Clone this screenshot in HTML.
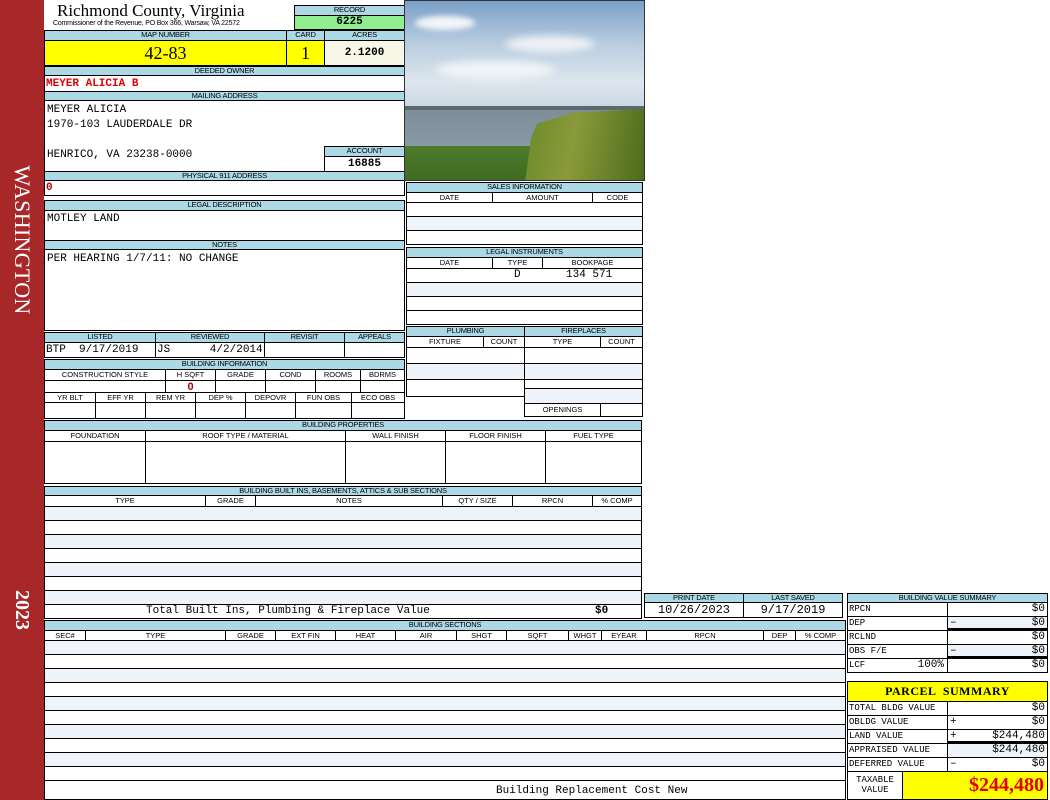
<!DOCTYPE html>
<html><head><meta charset="utf-8"><style>
*{margin:0;padding:0;box-sizing:border-box}
body{width:1050px;height:800px;background:#fff;position:relative;overflow:hidden;font-family:"Liberation Sans",sans-serif}
div{position:absolute}
.h{background:#add8e6;border:1px solid #000;font-size:7.5px;text-align:center;line-height:8px;color:#000;letter-spacing:-0.2px;white-space:nowrap;overflow:hidden}
.c{border:1px solid #000;background:#fff;font-family:"Liberation Mono",monospace;font-size:11px;white-space:pre;overflow:hidden}
.s{border:1px solid #000;background:#fff;font-size:7.5px;text-align:center;line-height:9px;white-space:nowrap;overflow:hidden}
.a{background:#eef3fa}
.m{font-family:"Liberation Mono",monospace}
</style></head><body>
<div style="left:0;top:0;width:44px;height:800px;background:#a8282a"></div>
<div style="left:7px;top:155px;width:30px;height:170px;"><div style="left:-70px;top:70px;width:170px;height:30px;transform:rotate(90deg);color:#fff;font-family:'Liberation Serif',serif;font-size:22px;line-height:30px;text-align:center;letter-spacing:0.3px">WASHINGTON</div></div>
<div style="left:7px;top:590px;width:30px;height:40px;"><div style="left:-5px;top:5px;width:40px;height:30px;transform:rotate(90deg);color:#fff;font-family:'Liberation Serif',serif;font-size:20px;font-weight:bold;line-height:30px;text-align:center">2023</div></div>

<div style="left:57px;top:1px;font-family:'Liberation Serif',serif;font-size:17px;line-height:20px">Richmond County, Virginia</div>
<div style="left:53px;top:19px;font-size:7px;line-height:9px;letter-spacing:-0.2px">Commissioner of the Revenue, PO Box 366, Warsaw, VA 22572</div>
<div class="h" style="left:294px;top:5px;width:111px;height:11px">RECORD</div>
<div class="c" style="left:294px;top:15px;width:111px;height:15px;background:#90ee90;text-align:center;font-weight:bold;line-height:13px">6225</div>

<div class="h" style="left:44px;top:30px;width:243px;height:11px">MAP NUMBER</div>
<div class="h" style="left:286px;top:30px;width:39px;height:11px">CARD</div>
<div class="h" style="left:324px;top:30px;width:81px;height:11px">ACRES</div>
<div class="c" style="left:44px;top:40px;width:243px;height:26px;background:#ffff00;font-family:'Liberation Serif',serif;font-size:18px;text-align:center;line-height:24px">42-83</div>
<div class="c" style="left:286px;top:40px;width:39px;height:26px;background:#ffff00;font-family:'Liberation Serif',serif;font-size:18px;text-align:center;line-height:24px">1</div>
<div class="c" style="left:324px;top:40px;width:81px;height:26px;background:#f7f7e8;text-align:center;line-height:24px;font-weight:bold">2.1200</div>

<div class="h" style="left:44px;top:66px;width:361px;height:10px">DEEDED OWNER</div>
<div class="c" style="left:44px;top:75px;width:361px;height:17px;color:#e00000;font-weight:bold;line-height:16px;padding-left:1px">MEYER ALICIA B</div>
<div class="h" style="left:44px;top:91px;width:361px;height:10px">MAILING ADDRESS</div>
<div class="c" style="left:44px;top:100px;width:361px;height:72px;padding:2px 2px;line-height:15px">MEYER ALICIA
1970-103 LAUDERDALE DR

HENRICO, VA 23238-0000</div>
<div class="h" style="left:324px;top:146px;width:81px;height:11px">ACCOUNT</div>
<div class="c" style="left:324px;top:156px;width:81px;height:16px;text-align:center;font-weight:bold;line-height:14px">16885</div>
<div class="h" style="left:44px;top:171px;width:361px;height:10px">PHYSICAL 911 ADDRESS</div>
<div class="c" style="left:44px;top:180px;width:361px;height:16px;color:#c00000;font-weight:bold;line-height:15px;padding-left:1px">0</div>

<div class="h" style="left:44px;top:200px;width:361px;height:11px">LEGAL DESCRIPTION</div>
<div class="c" style="left:44px;top:210px;width:361px;height:31px;padding:2px 2px;line-height:13px">MOTLEY LAND</div>
<div class="h" style="left:44px;top:240px;width:361px;height:10px">NOTES</div>
<div class="c" style="left:44px;top:249px;width:361px;height:82px;padding:2px 2px;line-height:15px">PER HEARING 1/7/11: NO CHANGE</div>

<!-- photo -->
<div style="left:404px;top:0;width:241px;height:181px;overflow:hidden;border:1px solid #333">
 <div style="left:0;top:0;width:241px;height:108px;background:linear-gradient(#7aa0c8,#b9cde0 40%,#dde6ee 75%,#c9d6e2)"></div>
 <div style="left:10px;top:15px;width:60px;height:14px;background:#f3f6f8;border-radius:50%;filter:blur(3px)"></div>
 <div style="left:100px;top:35px;width:90px;height:16px;background:#eef2f6;border-radius:50%;filter:blur(4px)"></div>
 <div style="left:30px;top:60px;width:120px;height:18px;background:#f0f4f7;border-radius:50%;filter:blur(4px)"></div>
 <div style="left:0;top:105px;width:241px;height:4px;background:#5a6a6c"></div>
 <div style="left:0;top:109px;width:241px;height:40px;background:linear-gradient(#7d8e9a,#8a9aa4)"></div>
 <div style="left:0;top:145px;width:241px;height:36px;background:linear-gradient(#4e7a2a,#3e6a22)"></div>
 <div style="left:120px;top:108px;width:121px;height:73px;background:linear-gradient(100deg,#6a8a2a,#8a9a3a 40%,#4a6a1a);clip-path:polygon(10% 20%,40% 5%,100% 0,100% 100%,0 100%,5% 40%)"></div>
</div>

<!-- listed -->
<div class="h" style="left:44px;top:332px;width:112px;height:11px">LISTED</div>
<div class="h" style="left:155px;top:332px;width:110px;height:11px">REVIEWED</div>
<div class="h" style="left:264px;top:332px;width:81px;height:11px">REVISIT</div>
<div class="h" style="left:344px;top:332px;width:61px;height:11px">APPEALS</div>
<div class="c" style="left:44px;top:342px;width:112px;height:16px;line-height:14px;padding-left:1px">BTP  9/17/2019</div>
<div class="c" style="left:155px;top:342px;width:110px;height:16px;line-height:14px;padding-left:1px">JS      4/2/2014</div>
<div class="c" style="left:264px;top:342px;width:81px;height:16px"></div>
<div class="c" style="left:344px;top:342px;width:61px;height:16px"></div>

<div class="h" style="left:44px;top:359px;width:361px;height:11px">BUILDING INFORMATION</div>
<div class="s" style="left:44px;top:369px;width:122px;height:12px">CONSTRUCTION STYLE</div>
<div class="s" style="left:165px;top:369px;width:51px;height:12px">H SQFT</div>
<div class="s" style="left:215px;top:369px;width:51px;height:12px">GRADE</div>
<div class="s" style="left:265px;top:369px;width:51px;height:12px">COND</div>
<div class="s" style="left:315px;top:369px;width:46px;height:12px">ROOMS</div>
<div class="s" style="left:360px;top:369px;width:45px;height:12px">BDRMS</div>
<div class="c" style="left:44px;top:380px;width:122px;height:13px"></div>
<div class="c" style="left:165px;top:380px;width:51px;height:13px;color:#c00000;font-weight:bold;text-align:center;line-height:12px;font-family:'Liberation Sans',sans-serif">0</div>
<div class="c" style="left:215px;top:380px;width:51px;height:13px"></div>
<div class="c" style="left:265px;top:380px;width:51px;height:13px"></div>
<div class="c" style="left:315px;top:380px;width:46px;height:13px"></div>
<div class="c" style="left:360px;top:380px;width:45px;height:13px"></div>
<div class="s" style="left:44px;top:392px;width:52px;height:11px">YR BLT</div>
<div class="s" style="left:95px;top:392px;width:51px;height:11px">EFF YR</div>
<div class="s" style="left:145px;top:392px;width:51px;height:11px">REM YR</div>
<div class="s" style="left:195px;top:392px;width:51px;height:11px">DEP %</div>
<div class="s" style="left:245px;top:392px;width:51px;height:11px">DEPOVR</div>
<div class="s" style="left:295px;top:392px;width:57px;height:11px">FUN OBS</div>
<div class="s" style="left:351px;top:392px;width:54px;height:11px">ECO OBS</div>
<div class="c" style="left:44px;top:402px;width:52px;height:17px"></div>
<div class="c" style="left:95px;top:402px;width:51px;height:17px"></div>
<div class="c" style="left:145px;top:402px;width:51px;height:17px"></div>
<div class="c" style="left:195px;top:402px;width:51px;height:17px"></div>
<div class="c" style="left:245px;top:402px;width:51px;height:17px"></div>
<div class="c" style="left:295px;top:402px;width:57px;height:17px"></div>
<div class="c" style="left:351px;top:402px;width:54px;height:17px"></div>

<!-- sales -->
<div class="h" style="left:406px;top:182px;width:237px;height:11px">SALES INFORMATION</div>
<div class="s" style="left:406px;top:192px;width:87px;height:11px">DATE</div>
<div class="s" style="left:492px;top:192px;width:101px;height:11px">AMOUNT</div>
<div class="s" style="left:592px;top:192px;width:51px;height:11px">CODE</div>
<div class="c" style="left:406px;top:202px;width:237px;height:15px"></div>
<div class="c a" style="left:406px;top:216px;width:237px;height:15px"></div>
<div class="c" style="left:406px;top:230px;width:237px;height:15px"></div>

<div class="h" style="left:406px;top:247px;width:237px;height:11px">LEGAL INSTRUMENTS</div>
<div class="s" style="left:406px;top:257px;width:87px;height:12px">DATE</div>
<div class="s" style="left:492px;top:257px;width:51px;height:12px">TYPE</div>
<div class="s" style="left:542px;top:257px;width:101px;height:12px">BOOKPAGE</div>
<div class="c" style="left:406px;top:268px;width:237px;height:15px;line-height:13px"><span style="position:absolute;left:107px">D</span><span style="position:absolute;left:159px">134 571</span></div>
<div class="c a" style="left:406px;top:282px;width:237px;height:15px"></div>
<div class="c" style="left:406px;top:296px;width:237px;height:15px"></div>
<div class="c" style="left:406px;top:310px;width:237px;height:15px"></div>

<!-- plumbing -->
<div class="h" style="left:406px;top:326px;width:119px;height:11px">PLUMBING</div>
<div class="h" style="left:524px;top:326px;width:119px;height:11px">FIREPLACES</div>
<div class="s" style="left:406px;top:336px;width:78px;height:12px">FIXTURE</div>
<div class="s" style="left:483px;top:336px;width:42px;height:12px">COUNT</div>
<div class="s" style="left:524px;top:336px;width:77px;height:12px">TYPE</div>
<div class="s" style="left:600px;top:336px;width:43px;height:12px">COUNT</div>
<div class="c" style="left:406px;top:347px;width:119px;height:17px"></div>
<div class="c a" style="left:406px;top:363px;width:119px;height:17px"></div>
<div class="c" style="left:406px;top:379px;width:119px;height:18px"></div>
<div class="c" style="left:524px;top:347px;width:119px;height:17px"></div>
<div class="c a" style="left:524px;top:363px;width:119px;height:17px"></div>
<div class="c" style="left:524px;top:379px;width:119px;height:17px"></div>
<div class="c a" style="left:524px;top:388px;width:119px;height:16px"></div>
<div class="s" style="left:524px;top:403px;width:77px;height:14px;line-height:12px">OPENINGS</div>
<div class="c" style="left:600px;top:403px;width:43px;height:14px"></div>

<!-- building properties -->
<div class="h" style="left:44px;top:420px;width:598px;height:11px">BUILDING PROPERTIES</div>
<div class="s" style="left:44px;top:430px;width:102px;height:12px">FOUNDATION</div>
<div class="s" style="left:145px;top:430px;width:201px;height:12px">ROOF TYPE / MATERIAL</div>
<div class="s" style="left:345px;top:430px;width:101px;height:12px">WALL FINISH</div>
<div class="s" style="left:445px;top:430px;width:101px;height:12px">FLOOR FINISH</div>
<div class="s" style="left:545px;top:430px;width:97px;height:12px">FUEL TYPE</div>
<div class="c" style="left:44px;top:441px;width:102px;height:43px"></div>
<div class="c" style="left:145px;top:441px;width:201px;height:43px"></div>
<div class="c" style="left:345px;top:441px;width:101px;height:43px"></div>
<div class="c" style="left:445px;top:441px;width:101px;height:43px"></div>
<div class="c" style="left:545px;top:441px;width:97px;height:43px"></div>

<!-- built ins -->
<div class="h" style="left:44px;top:486px;width:598px;height:10px">BUILDING BUILT INS, BASEMENTS, ATTICS &amp; SUB SECTIONS</div>
<div class="s" style="left:44px;top:495px;width:162px;height:12px">TYPE</div>
<div class="s" style="left:205px;top:495px;width:51px;height:12px">GRADE</div>
<div class="s" style="left:255px;top:495px;width:188px;height:12px">NOTES</div>
<div class="s" style="left:442px;top:495px;width:71px;height:12px">QTY / SIZE</div>
<div class="s" style="left:512px;top:495px;width:81px;height:12px">RPCN</div>
<div class="s" style="left:592px;top:495px;width:50px;height:12px">% COMP</div>
<div class="c a" style="left:44px;top:506px;width:598px;height:15px"></div>
<div class="c" style="left:44px;top:520px;width:598px;height:15px"></div>
<div class="c a" style="left:44px;top:534px;width:598px;height:15px"></div>
<div class="c" style="left:44px;top:548px;width:598px;height:15px"></div>
<div class="c a" style="left:44px;top:562px;width:598px;height:15px"></div>
<div class="c" style="left:44px;top:576px;width:598px;height:15px"></div>
<div class="c a" style="left:44px;top:590px;width:598px;height:15px"></div>
<div class="c" style="left:44px;top:604px;width:598px;height:15px;line-height:13px"><span style="position:absolute;left:101px">Total Built Ins, Plumbing &amp; Fireplace Value</span><span style="position:absolute;left:550px;font-weight:bold">$0</span></div>

<!-- print date -->
<div class="h" style="left:644px;top:593px;width:100px;height:10px">PRINT DATE</div>
<div class="h" style="left:743px;top:593px;width:100px;height:10px">LAST SAVED</div>
<div class="c" style="left:644px;top:602px;width:100px;height:16px;text-align:center;line-height:14px;font-size:12px">10/26/2023</div>
<div class="c" style="left:743px;top:602px;width:100px;height:16px;text-align:center;line-height:14px;font-size:12px">9/17/2019</div>

<!-- building sections -->
<div class="h" style="left:44px;top:620px;width:802px;height:11px">BUILDING SECTIONS</div>
<div class="s" style="left:44px;top:630px;width:42px;height:11px">SEC#</div>
<div class="s" style="left:85px;top:630px;width:141px;height:11px">TYPE</div>
<div class="s" style="left:225px;top:630px;width:51px;height:11px">GRADE</div>
<div class="s" style="left:275px;top:630px;width:61px;height:11px">EXT FIN</div>
<div class="s" style="left:335px;top:630px;width:61px;height:11px">HEAT</div>
<div class="s" style="left:395px;top:630px;width:62px;height:11px">AIR</div>
<div class="s" style="left:456px;top:630px;width:51px;height:11px">SHGT</div>
<div class="s" style="left:506px;top:630px;width:63px;height:11px">SQFT</div>
<div class="s" style="left:568px;top:630px;width:34px;height:11px">WHGT</div>
<div class="s" style="left:601px;top:630px;width:46px;height:11px">EYEAR</div>
<div class="s" style="left:646px;top:630px;width:118px;height:11px">RPCN</div>
<div class="s" style="left:763px;top:630px;width:33px;height:11px">DEP</div>
<div class="s" style="left:795px;top:630px;width:51px;height:11px">% COMP</div>
<div class="c a" style="left:44px;top:640px;width:802px;height:15px"></div>
<div class="c" style="left:44px;top:654px;width:802px;height:15px"></div>
<div class="c a" style="left:44px;top:668px;width:802px;height:15px"></div>
<div class="c" style="left:44px;top:682px;width:802px;height:15px"></div>
<div class="c a" style="left:44px;top:696px;width:802px;height:15px"></div>
<div class="c" style="left:44px;top:710px;width:802px;height:15px"></div>
<div class="c a" style="left:44px;top:724px;width:802px;height:15px"></div>
<div class="c" style="left:44px;top:738px;width:802px;height:15px"></div>
<div class="c a" style="left:44px;top:752px;width:802px;height:15px"></div>
<div class="c" style="left:44px;top:766px;width:802px;height:15px"></div>
<div class="c" style="left:44px;top:780px;width:802px;height:20px;line-height:20px"><span style="position:absolute;left:451px">Building Replacement Cost New</span></div>

<!-- value summary -->
<div class="h" style="left:847px;top:593px;width:201px;height:10px">BUILDING VALUE SUMMARY</div>
<div class="c m" style="left:847px;top:602px;width:101px;height:15px;font-size:9px;line-height:13px;padding-left:1px">RPCN</div>
<div class="c" style="left:947px;top:602px;width:101px;height:15px;text-align:right;line-height:13px;padding-right:2px">$0</div>
<div class="c m" style="left:847px;top:616px;width:101px;height:15px;font-size:9px;line-height:13px;padding-left:1px">DEP</div>
<div class="c a" style="left:947px;top:616px;width:101px;height:15px;line-height:13px;padding:0 2px;border-bottom:3px solid #000"><span>–</span><span style="position:absolute;right:2px">$0</span></div>
<div class="c m" style="left:847px;top:630px;width:101px;height:15px;font-size:9px;line-height:13px;padding-left:1px">RCLND</div>
<div class="c" style="left:947px;top:630px;width:101px;height:15px;text-align:right;line-height:13px;padding-right:2px">$0</div>
<div class="c m" style="left:847px;top:644px;width:101px;height:15px;font-size:9px;line-height:13px;padding-left:1px">OBS F/E</div>
<div class="c a" style="left:947px;top:644px;width:101px;height:15px;line-height:13px;padding:0 2px;border-bottom:3px solid #000"><span>–</span><span style="position:absolute;right:2px">$0</span></div>
<div class="c m" style="left:847px;top:658px;width:101px;height:15px;font-size:9px;line-height:13px;padding-left:1px">LCF<span style="position:absolute;right:3px;font-size:11px">100%</span></div>
<div class="c" style="left:947px;top:658px;width:101px;height:15px;text-align:right;line-height:13px;padding-right:2px">$0</div>

<!-- parcel summary -->
<div class="c" style="left:847px;top:681px;width:201px;height:21px;background:#ffff00;text-align:center;font-family:'Liberation Serif',serif;font-weight:bold;font-size:12px;line-height:19px;letter-spacing:0.5px">PARCEL  SUMMARY</div>
<div class="c m" style="left:847px;top:701px;width:101px;height:15px;font-size:9px;line-height:13px;padding-left:1px">TOTAL BLDG VALUE</div>
<div class="c" style="left:947px;top:701px;width:101px;height:15px;text-align:right;line-height:13px;padding-right:2px">$0</div>
<div class="c m" style="left:847px;top:715px;width:101px;height:15px;font-size:9px;line-height:13px;padding-left:1px">OBLDG VALUE</div>
<div class="c" style="left:947px;top:715px;width:101px;height:15px;line-height:13px;padding:0 2px"><span>+</span><span style="position:absolute;right:2px">$0</span></div>
<div class="c m" style="left:847px;top:729px;width:101px;height:15px;font-size:9px;line-height:13px;padding-left:1px">LAND VALUE</div>
<div class="c" style="left:947px;top:729px;width:101px;height:15px;line-height:13px;padding:0 2px;border-bottom:3px solid #000"><span>+</span><span style="position:absolute;right:2px">$244,480</span></div>
<div class="c m" style="left:847px;top:743px;width:101px;height:15px;font-size:9px;line-height:13px;padding-left:1px">APPRAISED VALUE</div>
<div class="c a" style="left:947px;top:743px;width:101px;height:15px;text-align:right;line-height:13px;padding-right:2px">$244,480</div>
<div class="c m" style="left:847px;top:757px;width:101px;height:15px;font-size:9px;line-height:13px;padding-left:1px">DEFERRED VALUE</div>
<div class="c" style="left:947px;top:757px;width:101px;height:15px;line-height:13px;padding:0 2px"><span>–</span><span style="position:absolute;right:2px">$0</span></div>
<div class="c m" style="left:847px;top:771px;width:56px;height:29px;font-size:9px;line-height:10px;text-align:center;padding-top:3px">TAXABLE
VALUE</div>
<div class="c" style="left:902px;top:771px;width:146px;height:29px;background:#ffff00;text-align:right;padding-right:3px;font-family:'Liberation Serif',serif;font-weight:bold;font-size:20px;color:#e00000;line-height:27px">$244,480</div>
</body></html>
